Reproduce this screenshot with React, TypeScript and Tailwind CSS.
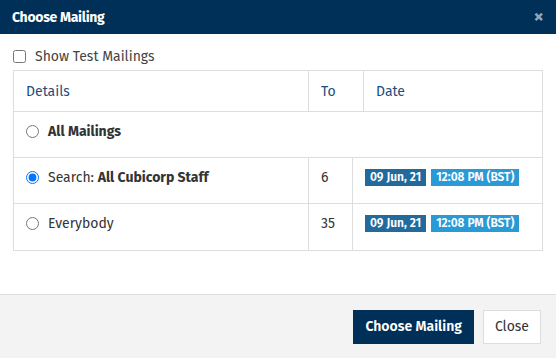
import React, { useState } from 'react';

const rows = [
  { id: 'search', prefix: 'Search: ', name: 'All Cubicorp Staff', to: 6 },
  { id: 'everybody', prefix: '', name: 'Everybody', to: 35 },
];

export default function App() {
  const [selected, setSelected] = useState('search');
  const [showTest, setShowTest] = useState(false);

  return (
    <div className="w-[556px] h-[358px] bg-white flex flex-col text-[#333] font-['Fira_Sans','Open_Sans',sans-serif] text-[14px]">
      {/* Header */}
      <div className="h-[34px] bg-[#003057] flex items-center justify-between pl-[12px] pr-[12px] shrink-0">
        <h3 className="text-white font-bold text-[14px] tracking-[-0.3px]">Choose Mailing</h3>
        <button className="text-[#8fa5bd] text-[20px] font-bold leading-none -mt-[2px]">×</button>
      </div>

      {/* Body */}
      <div className="flex-1 px-[13px] pt-[14px]">
        <label className="flex items-center gap-[9px] h-[16px] mb-[6px]">
          <input
            type="checkbox"
            checked={showTest}
            onChange={(e) => setShowTest(e.target.checked)}
            className="w-[13px] h-[13px] m-0"
          />
          <span className="text-[#444]">Show Test Mailings</span>
        </label>

        <div className="border border-[#dddddd] w-[530px]">
          <div className="flex h-[41px] border-b border-[#dddddd] text-[#1d4e7e]">
            <div className="w-[295px] pl-[12px] flex items-center border-r border-[#dddddd]">Details</div>
            <div className="w-[55px] pl-[12px] flex items-center border-r border-[#dddddd]">To</div>
            <div className="flex-1 pl-[12px] flex items-center">Date</div>
          </div>

          <label className="flex items-center h-[46px] pl-[12px] pb-[6px] gap-[9px] border-b border-[#dddddd]">
            <input
              type="radio"
              name="mailing"
              checked={selected === 'all'}
              onChange={() => setSelected('all')}
              className="w-[13px] h-[13px] m-0"
            />
            <span className="font-bold">All Mailings</span>
          </label>

          {rows.map((r, i) => (
            <div key={r.id} className={`flex h-[46px] ${i < rows.length - 1 ? 'border-b border-[#dddddd]' : ''}`}>
              <label className="w-[295px] pl-[12px] pb-[7px] flex items-center gap-[9px] border-r border-[#dddddd]">
                <input
                  type="radio"
                  name="mailing"
                  checked={selected === r.id}
                  onChange={() => setSelected(r.id)}
                  className="w-[13px] h-[13px] m-0"
                />
                <span>
                  {r.prefix}
                  {r.prefix ? <b className="font-bold">{r.name}</b> : r.name}
                </span>
              </label>
              <div className="w-[44px] pl-[12px] pb-[7px] flex items-center border-r border-[#dddddd]">{r.to}</div>
              <div className="flex-1 pl-[12px] pb-[7px] flex items-center gap-[5px]">
                <span className="bg-[#236a9c] text-white text-[12px] font-semibold leading-[17px] px-[5px]">09 Jun, 21</span>
                <span className="bg-[#2a9ad6] text-white text-[12px] font-semibold leading-[17px] px-[5px]">12:08 PM (BST)</span>
              </div>
            </div>
          ))}
        </div>
      </div>

      {/* Footer */}
      <div className="h-[64px] shrink-0 bg-[#f3f3f3] border-t border-[#dddddd] flex items-center justify-end gap-[9px] pr-[15px]">
        <button className="h-[34px] px-[12px] bg-[#003057] text-white font-semibold">Choose Mailing</button>
        <button className="h-[34px] px-[11px] bg-white border border-[#dddddd] text-[#333]">Close</button>
      </div>
    </div>
  );
}
